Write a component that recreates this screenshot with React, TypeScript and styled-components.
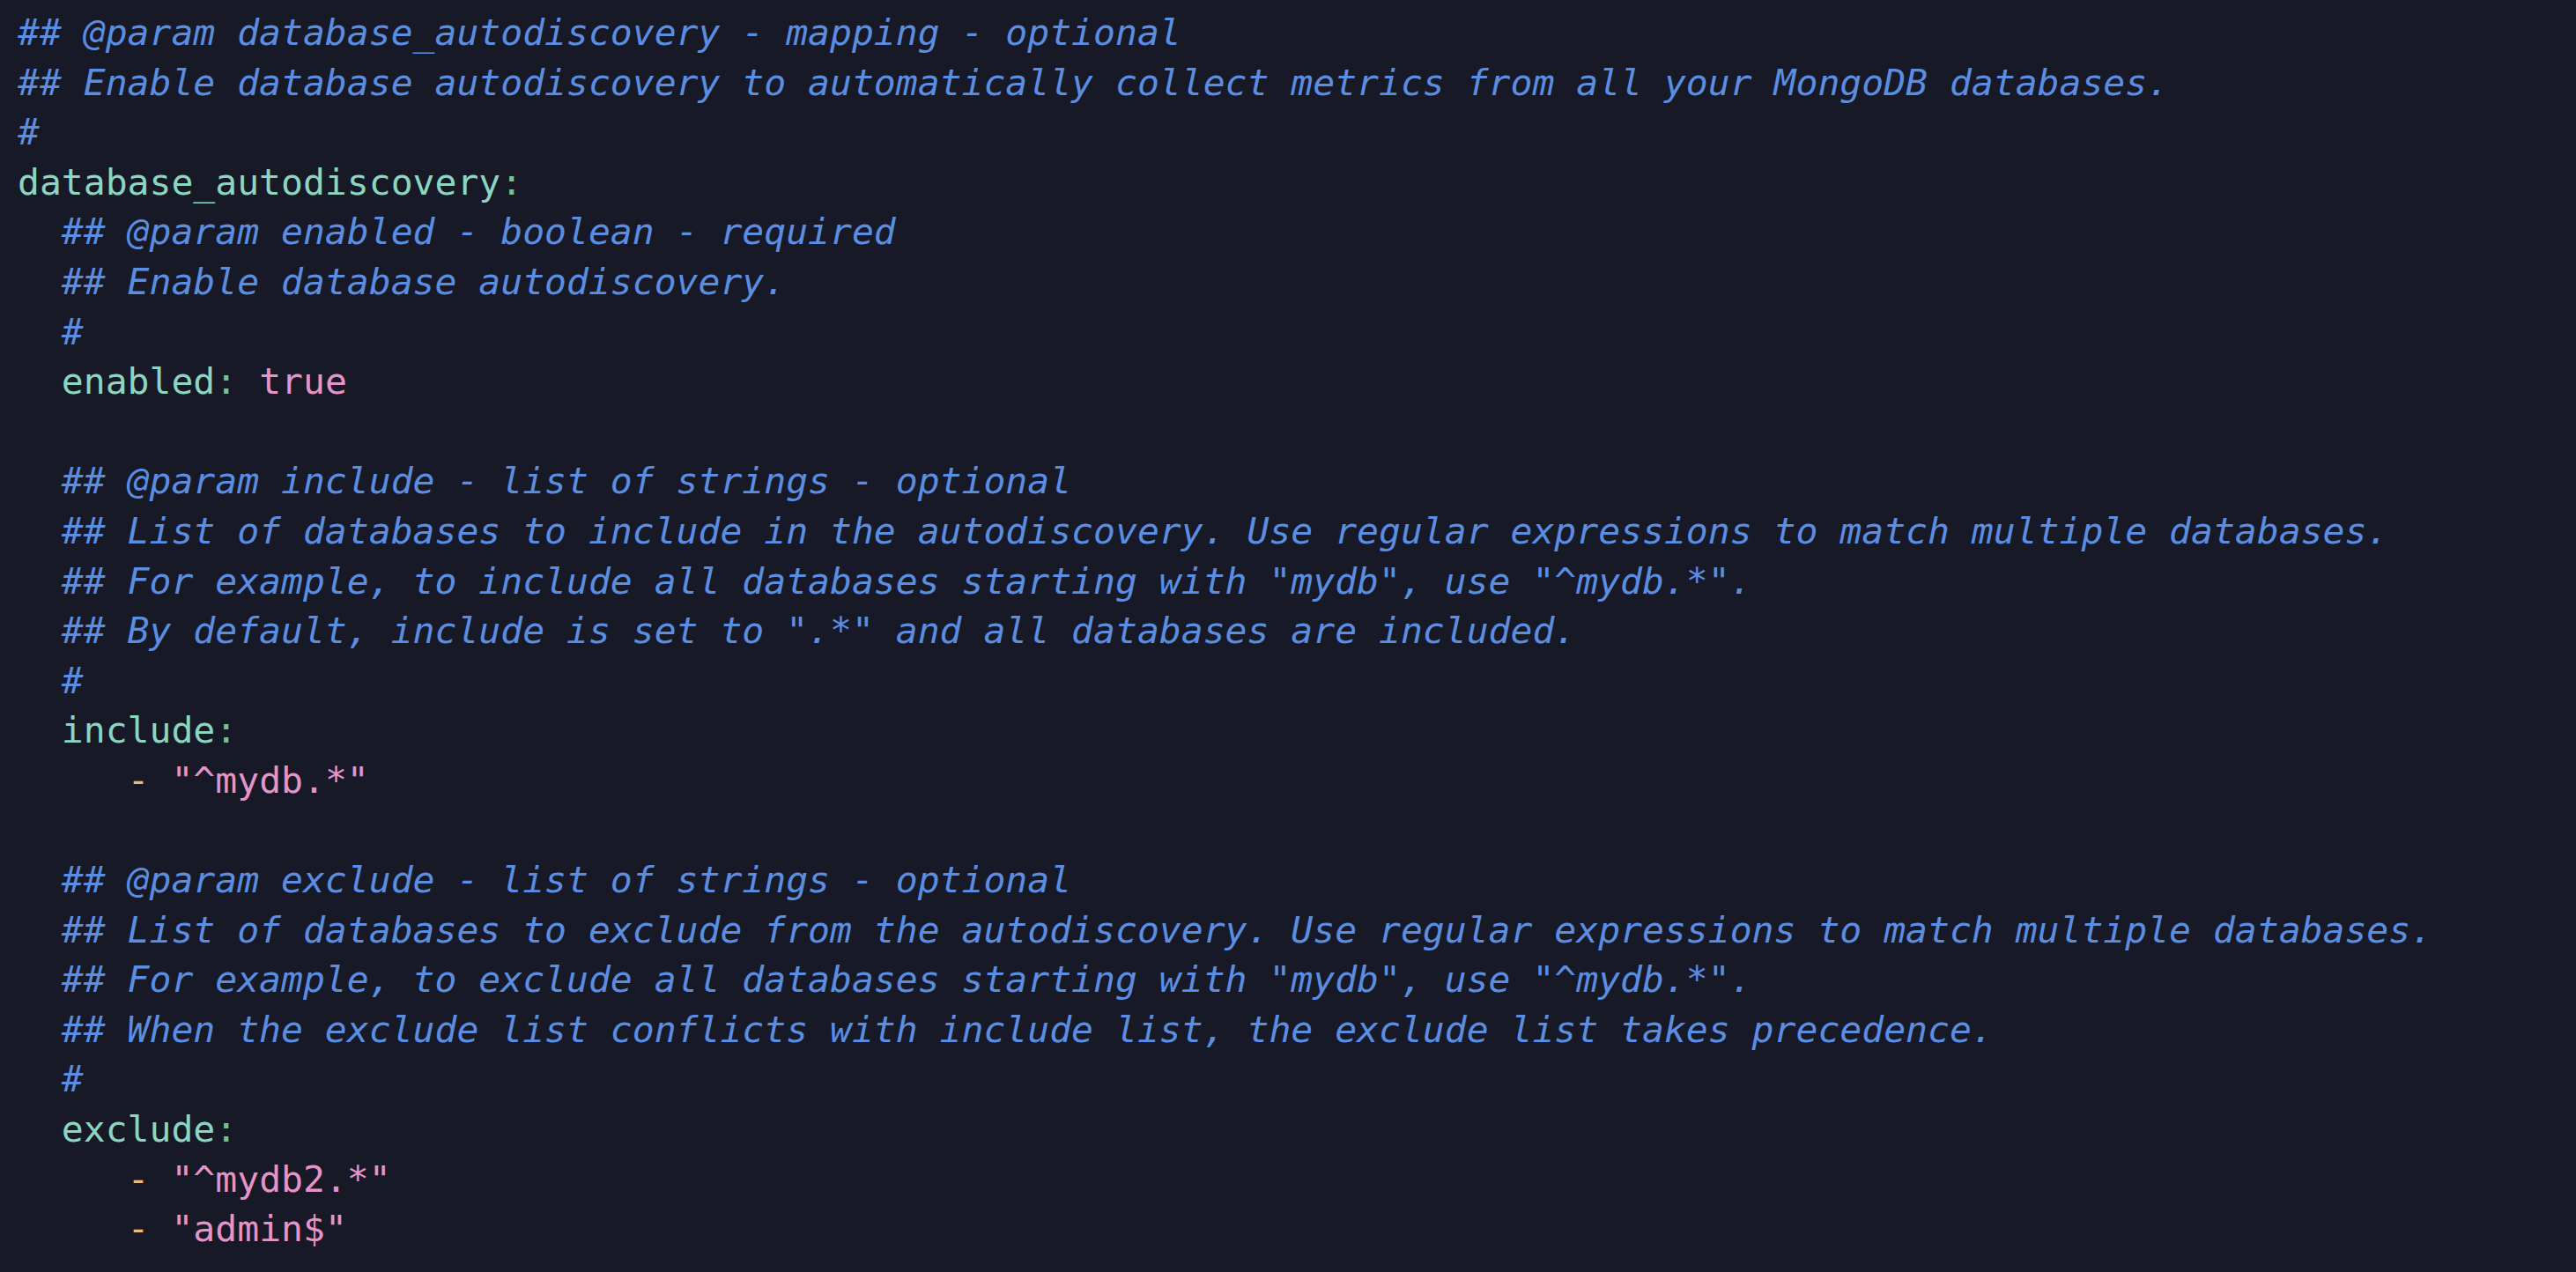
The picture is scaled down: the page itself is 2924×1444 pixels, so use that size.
import React from "react";
import styled, { createGlobalStyle } from "styled-components";

const Global = createGlobalStyle`
  html, body { margin: 0; padding: 0; background: #171927; }
  #root { min-height: 100vh; background: #171927; }
`;

type Kind = "comment" | "key" | "colon" | "value" | "dash" | "plain";
type Tok = [Kind, string];

const Editor = styled.div`
  box-sizing: border-box;
  width: 100%;
  min-height: 100vh;
  background: #171927;
  padding: 9px 0 0 20px;
  display: flex;
  flex-direction: column;
  font-family: "DejaVu Sans Mono", "Liberation Mono", monospace;
  font-size: 41.4px;
  line-height: 56.6px;
`;

const Line = styled.div`
  white-space: pre;
  height: 56.6px;
`;

const colors: Record<Kind, string> = {
  comment: "#5b8de0",
  key: "#8cd5c0",
  colon: "#7dbf8c",
  value: "#e494c8",
  dash: "#e6bb7c",
  plain: "#c8cde0",
};

const Token = styled.span<{ $kind: Kind }>`
  color: ${(p) => colors[p.$kind]};
  font-style: ${(p) => (p.$kind === "comment" ? "italic" : "normal")};
`;

const c = (s: string): Tok[] => [["comment", s]];
const kv = (indent: string, key: string, value?: string): Tok[] => {
  const t: Tok[] = [["plain", indent], ["key", key], ["colon", ":"]];
  if (value) t.push(["plain", " "], ["value", value]);
  return t;
};
const item = (indent: string, v: string): Tok[] => [
  ["plain", indent],
  ["dash", "-"],
  ["plain", " "],
  ["value", v],
];

const lines: Tok[][] = [
  c("## @param database_autodiscovery - mapping - optional"),
  c("## Enable database autodiscovery to automatically collect metrics from all your MongoDB databases."),
  c("#"),
  kv("", "database_autodiscovery"),
  c("  ## @param enabled - boolean - required"),
  c("  ## Enable database autodiscovery."),
  c("  #"),
  kv("  ", "enabled", "true"),
  [],
  c("  ## @param include - list of strings - optional"),
  c("  ## List of databases to include in the autodiscovery. Use regular expressions to match multiple databases."),
  c('  ## For example, to include all databases starting with "mydb", use "^mydb.*".'),
  c('  ## By default, include is set to ".*" and all databases are included.'),
  c("  #"),
  kv("  ", "include"),
  item("     ", '"^mydb.*"'),
  [],
  c("  ## @param exclude - list of strings - optional"),
  c("  ## List of databases to exclude from the autodiscovery. Use regular expressions to match multiple databases."),
  c('  ## For example, to exclude all databases starting with "mydb", use "^mydb.*".'),
  c("  ## When the exclude list conflicts with include list, the exclude list takes precedence."),
  c("  #"),
  kv("  ", "exclude"),
  item("     ", '"^mydb2.*"'),
  item("     ", '"admin$"'),
];

export default function App() {
  return (
    <>
      <Global />
      <Editor>
        {lines.map((toks, i) => (
          <Line key={i}>
            {toks.map(([k, s], j) => (
              <Token key={j} $kind={k}>
                {s}
              </Token>
            ))}
          </Line>
        ))}
      </Editor>
    </>
  );
}
